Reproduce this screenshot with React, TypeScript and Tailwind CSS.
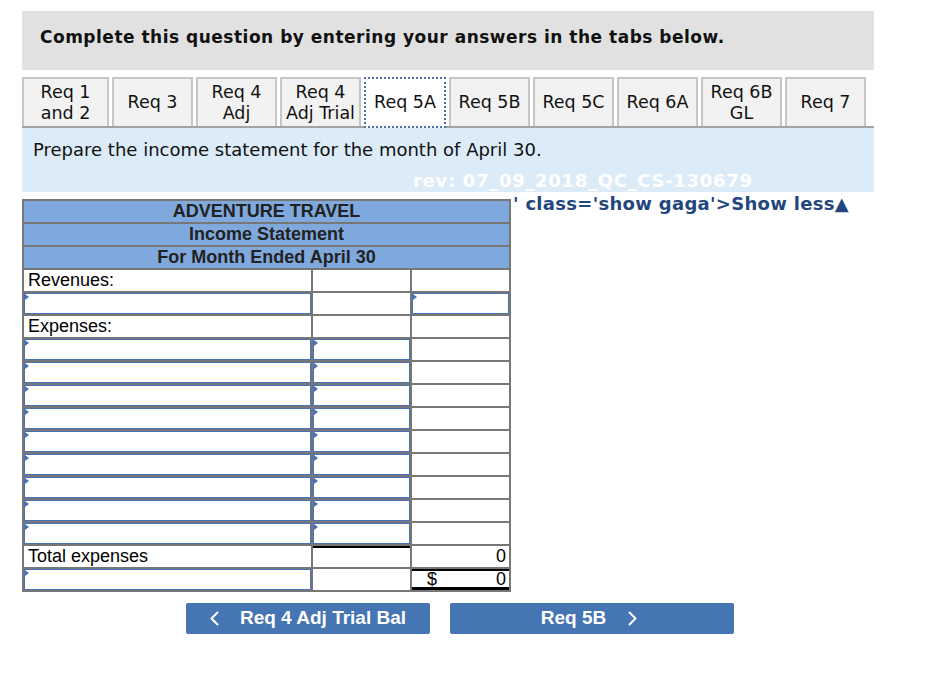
import React from "react"

const tabs = [
  ["Req 1", "and 2"],
  ["Req 3"],
  ["Req 4", "Adj"],
  ["Req 4", "Adj Trial"],
  ["Req 5A"],
  ["Req 5B"],
  ["Req 5C"],
  ["Req 6A"],
  ["Req 6B", "GL"],
  ["Req 7"],
]

const ACTIVE = 4

function InputBox() {
  return (
    <div className="relative h-full w-full border border-[#4a72b8] bg-white">
      <span className="absolute left-0 top-0 h-0 w-0 border-y-[3px] border-l-[4px] border-y-transparent border-l-[#4a72b8]" />
    </div>
  )
}

function Cell({
  children,
  className = "",
}: {
  children?: React.ReactNode
  className?: string
}) {
  return <div className={`h-[21px] bg-white ${className}`}>{children}</div>
}

export default function App() {
  const expenseRows = Array.from({ length: 9 })

  return (
    <div className="h-[682px] w-[950px] bg-white pl-[22px] pt-[11px] font-['DejaVu_Sans',sans-serif] text-[#111]">
      <div className="w-[852px]">
        {/* Header */}
        <div className="h-[59px] bg-[#e1e1e1] pl-[18px] pt-[16px] text-[17px] font-bold leading-[20px] tracking-[0.5px]">
          Complete this question by entering your answers in the tabs below.
        </div>

        {/* Tabs */}
        <div className="mt-[7px] flex h-[51px] gap-[3px] border-b-2 border-[#a3a3a3]">
          {tabs.map((t, i) =>
            i === ACTIVE ? (
              <div
                key={i}
                className="relative z-10 flex h-[51px] w-[82px] items-center justify-center border-2 border-dotted border-[#4a72b0] bg-white text-center text-[17.5px] leading-[21px]"
              >
                {t.join(" ")}
              </div>
            ) : (
              <div
                key={i}
                className={`flex h-[49px] flex-col items-center justify-center border-2 border-b-0 border-[#c6c6c6] bg-[#f2f2f2] text-center text-[17.5px] leading-[21px] ${
                  i === 0 ? "w-[87px]" : "w-[81px]"
                }`}
              >
                {t.map((line, j) => (
                  <span key={j} className="whitespace-nowrap">
                    {line}
                  </span>
                ))}
              </div>
            )
          )}
        </div>

        {/* Instructions band */}
        <div className="h-[64px] bg-[#dcebf8] pl-[11px] pt-[11px]">
          <div className="text-[18px] leading-[22px]">
            Prepare the income statement for the month of April 30.
          </div>
          <div className="mt-[10px] whitespace-nowrap pl-[380px] text-[18px] font-bold leading-[20px] tracking-[0.7px] text-white">
            rev: 07_09_2018_QC_CS-130679
          </div>
        </div>
      </div>

      {/* Statement table */}
      <div className="mt-[7px] flex items-start">
        <div className="grid w-[489px] shrink-0 grid-cols-[287px_97px_97px] gap-[2px] border-2 border-[#777] bg-[#777] font-['Liberation_Sans',Arial,sans-serif] text-[18px] leading-[21px] text-black">
          <div className="col-span-3 h-[21px] bg-[#7fa9dd] text-center font-bold text-[#222]">
            ADVENTURE TRAVEL
          </div>
          <div className="col-span-3 h-[21px] bg-[#7fa9dd] text-center font-bold text-[#222]">
            Income Statement
          </div>
          <div className="col-span-3 h-[21px] bg-[#7fa9dd] text-center font-bold text-[#222]">
            For Month Ended April 30
          </div>

          <Cell className="pl-[4px]">Revenues:</Cell>
          <Cell />
          <Cell />

          <Cell>
            <InputBox />
          </Cell>
          <Cell />
          <Cell>
            <InputBox />
          </Cell>

          <Cell className="pl-[4px]">Expenses:</Cell>
          <Cell />
          <Cell />

          {expenseRows.map((_, i) => (
            <React.Fragment key={i}>
              <Cell>
                <InputBox />
              </Cell>
              <Cell>
                <InputBox />
              </Cell>
              <Cell />
            </React.Fragment>
          ))}

          <Cell className="pl-[4px]">Total expenses</Cell>
          <Cell className="border-t-2 border-black" />
          <Cell className="pr-[3px] text-right">0</Cell>

          <Cell>
            <InputBox />
          </Cell>
          <Cell />
          <Cell className="flex justify-between border-b-[3px] border-t-2 border-b-double border-black pl-[15px] pr-[3px] leading-[16px]">
            <span>$</span>
            <span>0</span>
          </Cell>
        </div>

        <div className="-mt-[4px] ml-[2px] whitespace-nowrap text-[18px] font-bold leading-[18px] tracking-[0.3px] text-[#24467e]">
          ' class='show gaga'&gt;Show less▲
        </div>
      </div>

      {/* Navigation */}
      <div className="mt-[11px] flex gap-[20px] pl-[164px] font-['Liberation_Sans',Arial,sans-serif] text-[19px] font-bold text-white">
        <button className="flex h-[31px] w-[244px] items-center justify-center gap-[21px] rounded-[2px] bg-[#4675b3]">
          <svg width="9" height="15" viewBox="0 0 9 15" fill="none">
            <polyline points="7.5,1.5 1.5,7.5 7.5,13.5" stroke="white" strokeWidth="2" strokeLinecap="round" strokeLinejoin="round" />
          </svg>
          <span>Req 4 Adj Trial Bal</span>
        </button>
        <button className="flex h-[31px] w-[284px] items-center justify-center gap-[22px] rounded-[2px] bg-[#4675b3] pr-[6px]">
          <span>Req 5B</span>
          <svg width="9" height="15" viewBox="0 0 9 15" fill="none">
            <polyline points="1.5,1.5 7.5,7.5 1.5,13.5" stroke="white" strokeWidth="2" strokeLinecap="round" strokeLinejoin="round" />
          </svg>
        </button>
      </div>
    </div>
  )
}
